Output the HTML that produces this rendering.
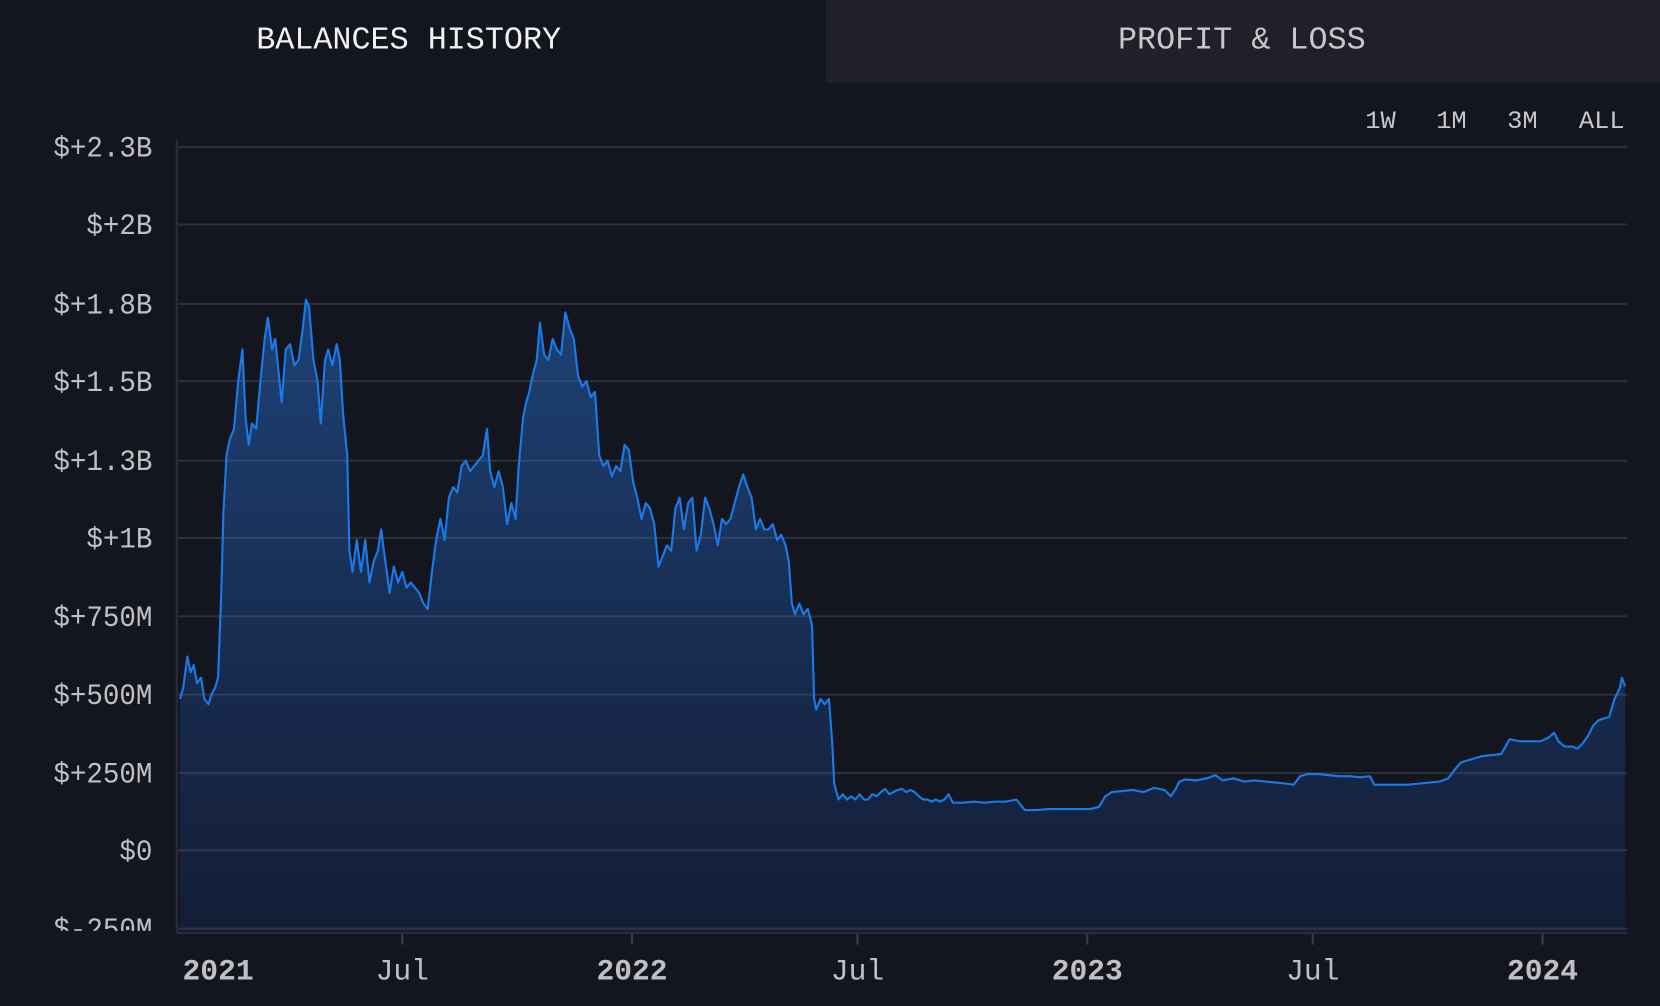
<!DOCTYPE html>
<html><head><meta charset="utf-8"><style>
html,body{margin:0;padding:0;background:#14161f;width:1660px;height:1006px;overflow:hidden}
svg{display:block}
text{font-family:"Liberation Mono","DejaVu Sans Mono",monospace}
</style></head><body>
<svg width="1660" height="1006" viewBox="0 0 1568 950" preserveAspectRatio="none">
<defs><linearGradient id="g" x1="0" y1="0" x2="0" y2="1"><stop offset="0" stop-color="#1d4276"/><stop offset="0.5" stop-color="#182e54"/><stop offset="1" stop-color="#141d36"/></linearGradient></defs>
<rect width="1568" height="950" fill="#14161f"/>
<rect x="780" y="0" width="788" height="78" fill="#1f2029"/>
<text x="386" y="46" fill="#f2f2f2" font-size="30" text-anchor="middle">BALANCES HISTORY</text>
<text x="1173" y="46" fill="#c8c8cc" font-size="30" text-anchor="middle">PROFIT &amp; LOSS</text>
<g fill="#c8c8cc" font-size="24" text-anchor="middle">
<text x="1304" y="121">1W</text><text x="1371" y="121">1M</text><text x="1438" y="121">3M</text><text x="1513" y="121">ALL</text></g>
<polygon fill="url(#g)" points="170,880 170,660 173,650 177,620 180,635 183,628 186,645 190,640 193,660 197,665 200,655 203,650 206,640 209,560 211,485 214,430 217,415 221,405 225,360 229,330 232,395 235,420 238,400 242,405 246,360 250,320 253,300 257,330 260,320 263,350 266,380 270,330 274,325 278,345 282,340 286,310 289,283 292,290 296,340 300,360 303,400 307,340 310,330 314,345 318,325 321,340 324,390 328,430 330,520 333,540 337,510 341,540 345,510 349,550 353,530 357,520 360,500 364,530 368,560 372,535 376,550 380,540 384,555 388,550 392,555 396,560 400,570 404,575 408,540 412,510 416,490 420,510 424,470 428,460 432,465 436,440 440,435 444,445 448,440 452,435 456,430 460,405 463,445 467,460 471,445 475,460 479,495 483,475 487,490 490,440 494,395 497,380 500,370 503,355 507,340 510,305 514,335 518,340 522,320 526,330 530,335 534,295 538,310 542,320 546,355 550,365 554,360 558,375 562,370 566,430 570,440 574,435 578,450 582,440 586,445 590,420 594,425 598,455 602,470 606,490 610,475 614,480 618,495 622,535 626,525 630,515 634,520 638,480 642,470 646,500 650,475 654,470 658,520 662,505 666,470 670,480 674,495 678,515 682,490 686,495 690,490 694,475 698,460 702,448 706,460 710,470 714,500 718,490 722,500 726,500 730,495 734,510 738,505 742,515 745,530 748,570 751,580 755,570 759,580 763,575 767,590 769,660 771,670 775,660 779,665 783,660 786,700 788,740 792,755 796,750 800,755 804,752 808,755 812,750 816,755 820,755 824,750 828,752 832,748 836,745 840,750 844,748 848,746 852,745 856,748 860,746 864,748 868,752 872,755 876,755 880,757 884,755 888,757 892,755 896,750 900,758 910,758 920,757 930,758 940,757 950,757 960,755 964,760 968,765 980,765 990,764 1000,764 1010,764 1020,764 1030,764 1038,762 1044,752 1050,748 1060,747 1070,746 1080,748 1090,744 1100,746 1106,752 1110,746 1114,738 1120,736 1130,737 1140,735 1148,732 1155,737 1165,735 1175,738 1185,737 1195,738 1205,739 1215,740 1222,741 1228,733 1235,731 1245,731 1255,732 1265,733 1275,733 1285,734 1294,733 1298,741 1310,741 1320,741 1330,741 1340,740 1350,739 1360,738 1368,735 1374,727 1380,720 1390,717 1400,714 1410,713 1418,712 1422,705 1426,698 1435,700 1445,700 1455,700 1462,697 1468,692 1472,700 1478,705 1485,705 1490,707 1495,702 1500,695 1505,685 1510,680 1520,677 1525,660 1530,650 1532,640 1535,648 1535,880"/>
<g stroke="#6e7380" stroke-opacity="0.28" stroke-width="2">
<line x1="168" y1="139" x2="1537" y2="139"/><line x1="168" y1="212" x2="1537" y2="212"/><line x1="168" y1="287" x2="1537" y2="287"/><line x1="168" y1="360" x2="1537" y2="360"/><line x1="168" y1="435" x2="1537" y2="435"/><line x1="168" y1="508" x2="1537" y2="508"/><line x1="168" y1="582" x2="1537" y2="582"/><line x1="168" y1="656" x2="1537" y2="656"/><line x1="168" y1="730" x2="1537" y2="730"/><line x1="168" y1="803" x2="1537" y2="803"/><line x1="168" y1="877" x2="1537" y2="877"/>
</g>
<polyline fill="none" stroke="#1a7ae8" stroke-width="2" stroke-linejoin="round" points="170,660 173,650 177,620 180,635 183,628 186,645 190,640 193,660 197,665 200,655 203,650 206,640 209,560 211,485 214,430 217,415 221,405 225,360 229,330 232,395 235,420 238,400 242,405 246,360 250,320 253,300 257,330 260,320 263,350 266,380 270,330 274,325 278,345 282,340 286,310 289,283 292,290 296,340 300,360 303,400 307,340 310,330 314,345 318,325 321,340 324,390 328,430 330,520 333,540 337,510 341,540 345,510 349,550 353,530 357,520 360,500 364,530 368,560 372,535 376,550 380,540 384,555 388,550 392,555 396,560 400,570 404,575 408,540 412,510 416,490 420,510 424,470 428,460 432,465 436,440 440,435 444,445 448,440 452,435 456,430 460,405 463,445 467,460 471,445 475,460 479,495 483,475 487,490 490,440 494,395 497,380 500,370 503,355 507,340 510,305 514,335 518,340 522,320 526,330 530,335 534,295 538,310 542,320 546,355 550,365 554,360 558,375 562,370 566,430 570,440 574,435 578,450 582,440 586,445 590,420 594,425 598,455 602,470 606,490 610,475 614,480 618,495 622,535 626,525 630,515 634,520 638,480 642,470 646,500 650,475 654,470 658,520 662,505 666,470 670,480 674,495 678,515 682,490 686,495 690,490 694,475 698,460 702,448 706,460 710,470 714,500 718,490 722,500 726,500 730,495 734,510 738,505 742,515 745,530 748,570 751,580 755,570 759,580 763,575 767,590 769,660 771,670 775,660 779,665 783,660 786,700 788,740 792,755 796,750 800,755 804,752 808,755 812,750 816,755 820,755 824,750 828,752 832,748 836,745 840,750 844,748 848,746 852,745 856,748 860,746 864,748 868,752 872,755 876,755 880,757 884,755 888,757 892,755 896,750 900,758 910,758 920,757 930,758 940,757 950,757 960,755 964,760 968,765 980,765 990,764 1000,764 1010,764 1020,764 1030,764 1038,762 1044,752 1050,748 1060,747 1070,746 1080,748 1090,744 1100,746 1106,752 1110,746 1114,738 1120,736 1130,737 1140,735 1148,732 1155,737 1165,735 1175,738 1185,737 1195,738 1205,739 1215,740 1222,741 1228,733 1235,731 1245,731 1255,732 1265,733 1275,733 1285,734 1294,733 1298,741 1310,741 1320,741 1330,741 1340,740 1350,739 1360,738 1368,735 1374,727 1380,720 1390,717 1400,714 1410,713 1418,712 1422,705 1426,698 1435,700 1445,700 1455,700 1462,697 1468,692 1472,700 1478,705 1485,705 1490,707 1495,702 1500,695 1505,685 1510,680 1520,677 1525,660 1530,650 1532,640 1535,648"/>
<line x1="167" y1="132" x2="167" y2="881" stroke="#2a2b40" stroke-width="2"/>
<line x1="167" y1="881" x2="1537" y2="881" stroke="#2a2b40" stroke-width="2"/>
<g stroke="#3a3b50" stroke-width="2">
<line x1="380" y1="882" x2="380" y2="892"/><line x1="597" y1="882" x2="597" y2="892"/><line x1="810" y1="882" x2="810" y2="892"/><line x1="1027" y1="882" x2="1027" y2="892"/><line x1="1240" y1="882" x2="1240" y2="892"/><line x1="1457" y1="882" x2="1457" y2="892"/>
</g>
<g fill="#c0c0c4" font-size="26" text-anchor="end">
<text x="144" y="148" transform="translate(0,-8.9) scale(1,1.06)">$+2.3B</text>
<text x="144" y="221" transform="translate(0,-13.3) scale(1,1.06)">$+2B</text>
<text x="144" y="296" transform="translate(0,-17.8) scale(1,1.06)">$+1.8B</text>
<text x="144" y="369" transform="translate(0,-22.1) scale(1,1.06)">$+1.5B</text>
<text x="144" y="444" transform="translate(0,-26.6) scale(1,1.06)">$+1.3B</text>
<text x="144" y="517" transform="translate(0,-31) scale(1,1.06)">$+1B</text>
<text x="144" y="591" transform="translate(0,-35.5) scale(1,1.06)">$+750M</text>
<text x="144" y="665" transform="translate(0,-39.9) scale(1,1.06)">$+500M</text>
<text x="144" y="739" transform="translate(0,-44.3) scale(1,1.06)">$+250M</text>
<text x="144" y="812" transform="translate(0,-48.7) scale(1,1.06)">$0</text>
<text x="144" y="886" transform="translate(0,-53.2) scale(1,1.06)">$-250M</text>
</g>
<rect x="0" y="879" width="160" height="20" fill="#14161f"/>
<g fill="#c0c0c4" font-size="28" text-anchor="middle">
<text x="206" y="925" font-weight="bold">2021</text><text x="380" y="925">Jul</text><text x="597" y="925" font-weight="bold">2022</text><text x="810" y="925">Jul</text><text x="1027" y="925" font-weight="bold">2023</text><text x="1240" y="925">Jul</text><text x="1457" y="925" font-weight="bold">2024</text>
</g>
</svg>
</body></html>
